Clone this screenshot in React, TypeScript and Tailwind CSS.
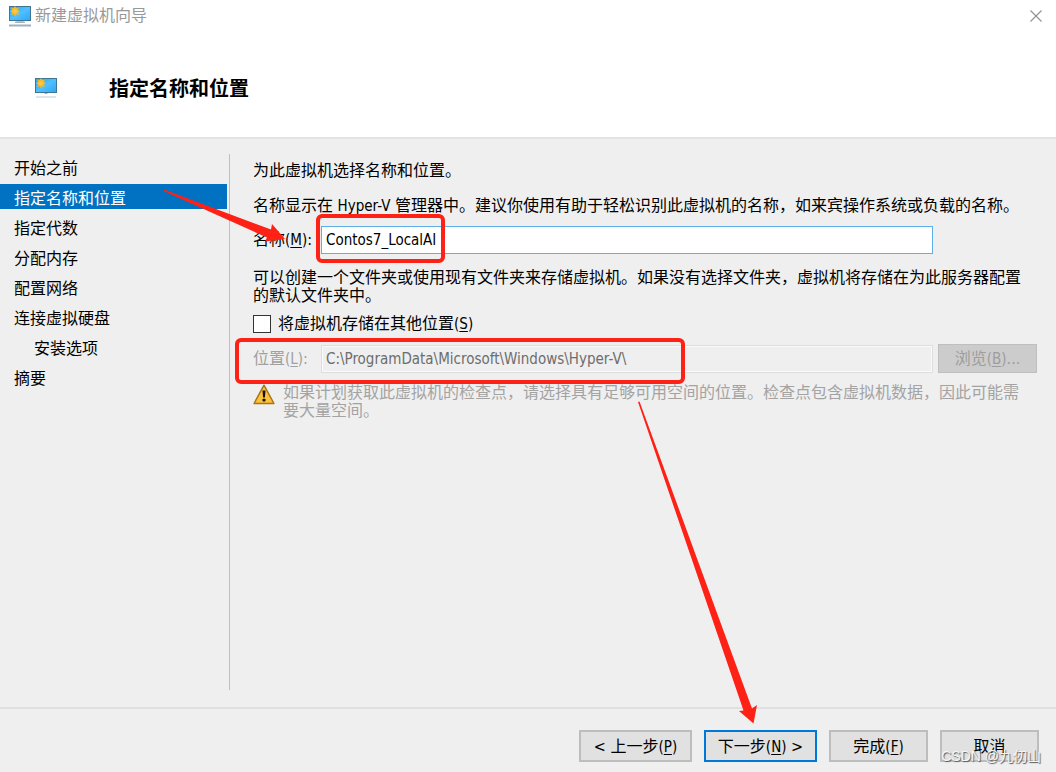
import type { ReactNode } from "react";

const steps = [
  { label: "开始之前" },
  { label: "指定名称和位置", current: true },
  { label: "指定代数" },
  { label: "分配内存" },
  { label: "配置网络" },
  { label: "连接虚拟硬盘" },
  { label: "安装选项", nested: true },
  { label: "摘要" },
];

function MonitorIcon({ faded = false }: { faded?: boolean }) {
  const id = faded ? "screen-small" : "screen";
  return (
    <svg width="22" height="21" viewBox="0 0 22 21" aria-hidden="true" className="shrink-0">
      <defs>
        <linearGradient id={id} x1="0" y1="0" x2="1" y2="1">
          <stop offset="0" stopColor="#2aa3f0" />
          <stop offset="0.5" stopColor="#4fc0ff" />
          <stop offset="1" stopColor="#2ba6fb" />
        </linearGradient>
      </defs>
      <rect x="0.5" y="0.5" width="21" height="14" fill={`url(#${id})`} stroke="#3f7593" />
      <path
        d="M6 0l1.300 2.200 2.500-.8-.8 2.500 2.200 1.300-2.200 1.300.8 2.500-2.500-.8L6 10.400l-1.300-2.200-2.500.8.8-2.500L0.800 5.200l2.200-1.300-.8-2.500 2.500.8z"
        fill="#f5b92c"
      />
      <circle cx="6" cy="5.200" r="2" fill="#ffca3d" />
      {faded ? (
        <>
          <path d="M9.500 15h3v1h-3z" fill="#8fb0c2" />
          <path d="M1 19h20" stroke="#cfdde6" strokeWidth="1.500" />
        </>
      ) : (
        <>
          <path d="M8 15h6l2 1.500H5z" fill="#b9cbd9" />
          <path d="M6 16.300h10" stroke="#8299ad" strokeWidth="0.800" />
          <path d="M0 19.500h22" stroke="#9fb0c0" strokeWidth="2" />
        </>
      )}
    </svg>
  );
}

function WarningIcon() {
  return (
    <svg width="22" height="21" viewBox="0 0 22 21" aria-hidden="true" className="shrink-0">
      <path d="M11 1.200L21 19.500H1z" fill="#f6b32c" stroke="#a8741c" strokeWidth="1.400" strokeLinejoin="round" />
      <path d="M11 3.500L18.800 18.200H3.200z" fill="#fdc23c" />
      <path d="M9.500 6.500h3l-.6 7h-1.800z" fill="#111" />
      <rect x="9.500" y="14.700" width="3" height="2.700" rx="0.800" fill="#111" />
    </svg>
  );
}

function WizardButton({ children, primary = false, className }: { children: ReactNode; primary?: boolean; className: string }) {
  return (
    <button
      type="button"
      className={`flex h-8 items-center justify-center whitespace-pre border-2 bg-[#e1e1e1] pt-0.5 ${
        primary ? "border-[#0078d7]" : "border-[#bdbdbd]"
      } ${className}`}
    >
      {children}
    </button>
  );
}

function Key({ children }: { children: ReactNode }) {
  return (
    <span className="text-[15px]">
      (<span className="underline underline-offset-2">{children}</span>)
    </span>
  );
}

export default function App() {
  return (
    <div className="relative flex min-h-screen flex-col bg-[#efefef] font-['DejaVu_Sans_Condensed','Noto_Sans_CJK_SC',sans-serif] text-base leading-[18px] text-black">
      <header className="border-b-2 border-[#e3e3e3] bg-white">
        <div className="flex h-8 items-center justify-between pl-[9px] pr-[14px]">
          <div className="flex items-center gap-1 text-[#999]">
            <MonitorIcon />
            <span>新建虚拟机向导</span>
          </div>
          <button type="button" aria-label="关闭" className="flex size-3 items-center justify-center text-[#8f8f8f]">
            <svg width="12" height="12" viewBox="0 0 12 12" aria-hidden="true">
              <path d="M0.500 0.500l11 11M11.500 0.500l-11 11" stroke="currentColor" strokeWidth="1.100" />
            </svg>
          </button>
        </div>
        <div className="flex h-[105px] items-center gap-[52px] pl-[35px] pt-2">
          <MonitorIcon faded />
          <h1 className="text-xl font-bold">指定名称和位置</h1>
        </div>
      </header>

      <main className="flex flex-1 pb-[17px] pt-[15px]">
        <nav className="w-[230px] shrink-0 border-r border-[#bfbfbf] pr-0.5">
          <ol className="flex flex-col gap-[5px]">
            {steps.map((step) => (
              <li key={step.label}>
                <a
                  href="#"
                  aria-current={step.current ? "step" : undefined}
                  className={`flex h-[25px] items-center pt-1 ${step.nested ? "pl-[34px]" : "pl-[14px]"} ${
                    step.current ? "bg-[#0072c1] text-white" : ""
                  }`}
                >
                  {step.label}
                </a>
              </li>
            ))}
          </ol>
        </nav>

        <form className="min-w-0 flex-1 pl-[23px] pr-[19px] pt-2">
          <p>为此虚拟机选择名称和位置。</p>
          <p className="mt-[17px]">
            名称显示在 <span className="text-[15px]">Hyper-V</span> 管理器中。建议你使用有助于轻松识别此虚拟机的名称，如来宾操作系统或负载的名称。
          </p>
          <div className="mt-[11px] flex h-7 items-center pr-[104px]">
            <label htmlFor="vm-name" className="w-[68px] shrink-0 whitespace-nowrap">
              名称<Key>M</Key>:
            </label>
            <input
              id="vm-name"
              type="text"
              defaultValue="Contos7_LocalAI"
              className="h-7 min-w-0 flex-1 border border-[#5fb0ea] bg-white px-1 text-[15px] outline-none"
            />
          </div>
          <p className="mt-[15px] pr-2">
            可以创建一个文件夹或使用现有文件夹来存储虚拟机。如果没有选择文件夹，虚拟机将存储在为此服务器配置的默认文件夹中。
          </p>
          <div className="mt-2.5 flex items-center gap-[7px]">
            <input
              id="other-location"
              type="checkbox"
              className="size-[18px] shrink-0 appearance-none border border-[#333] bg-white checked:bg-[#0072c1]"
            />
            <label htmlFor="other-location">
              将虚拟机存储在其他位置<Key>S</Key>
            </label>
          </div>
          <div className="mt-[11px] flex items-center">
            <label htmlFor="location" className="w-[68px] shrink-0 whitespace-nowrap text-[#a0a0a0]">
              位置<Key>L</Key>:
            </label>
            <input
              id="location"
              type="text"
              disabled
              defaultValue="C:\ProgramData\Microsoft\Windows\Hyper-V\"
              className="h-7 min-w-0 flex-1 border-2 border-[#fafafa] bg-[#efefef] px-[3px] text-[15px] text-[#6d6d6d] outline outline-1 -outline-offset-1 outline-[#dedede]"
            />
            <button
              type="button"
              disabled
              className="ml-[5px] h-[29px] w-[99px] shrink-0 border border-[#bfbfbf] bg-[#cccccc] text-[#9d9d9d]"
            >
              浏览<Key>B</Key>...
            </button>
          </div>
          <div className="mt-[11px] flex gap-2 pr-2 text-[#a3a3a3]">
            <WarningIcon />
            <p>
              如果计划获取此虚拟机的检查点，请选择具有足够可用空间的位置。检查点包含虚拟机数据，因此可能需要大量空间。
            </p>
          </div>
        </form>
      </main>

      <footer className="flex justify-end gap-3 border-t-2 border-[#e0e0e0] pb-2.5 pr-[17px] pt-[21px]">
        <WizardButton className="w-[113px]">
          {"< 上一步"}
          <Key>P</Key>
        </WizardButton>
        <WizardButton primary className="w-[113px]">
          下一步<Key>N</Key>
          {" >"}
        </WizardButton>
        <WizardButton className="w-[99px]">
          完成<Key>F</Key>
        </WizardButton>
        <WizardButton className="w-[99px]">取消</WizardButton>
      </footer>

      <svg
        width="1056"
        height="772"
        viewBox="0 0 1056 772"
        aria-hidden="true"
        className="pointer-events-none absolute left-0 top-0"
      >
        <g fill="none" stroke="#fe2116" strokeWidth="4">
          <rect x="318" y="216" width="125" height="45" rx="4" />
          <rect x="237" y="340" width="446" height="42" rx="4" />
        </g>
        <g fill="#fe2116">
          <path d="M164 189.500L271 229.500L272 224L285 239L265 241.500L267 237.500L163.500 191z" />
          <path d="M638 402L639.500 401.500L752 708.500L757 705L753.500 723.500L739 711L743.500 710.500z" />
        </g>
      </svg>
      <span className="pointer-events-none absolute bottom-1.5 right-[15px] whitespace-nowrap font-['Liberation_Sans','Noto_Sans_CJK_SC',sans-serif] text-sm text-[#f5f5f5] [text-shadow:1px_1px_1px_#555]">
        CSDN @九仞山
      </span>
    </div>
  );
}
